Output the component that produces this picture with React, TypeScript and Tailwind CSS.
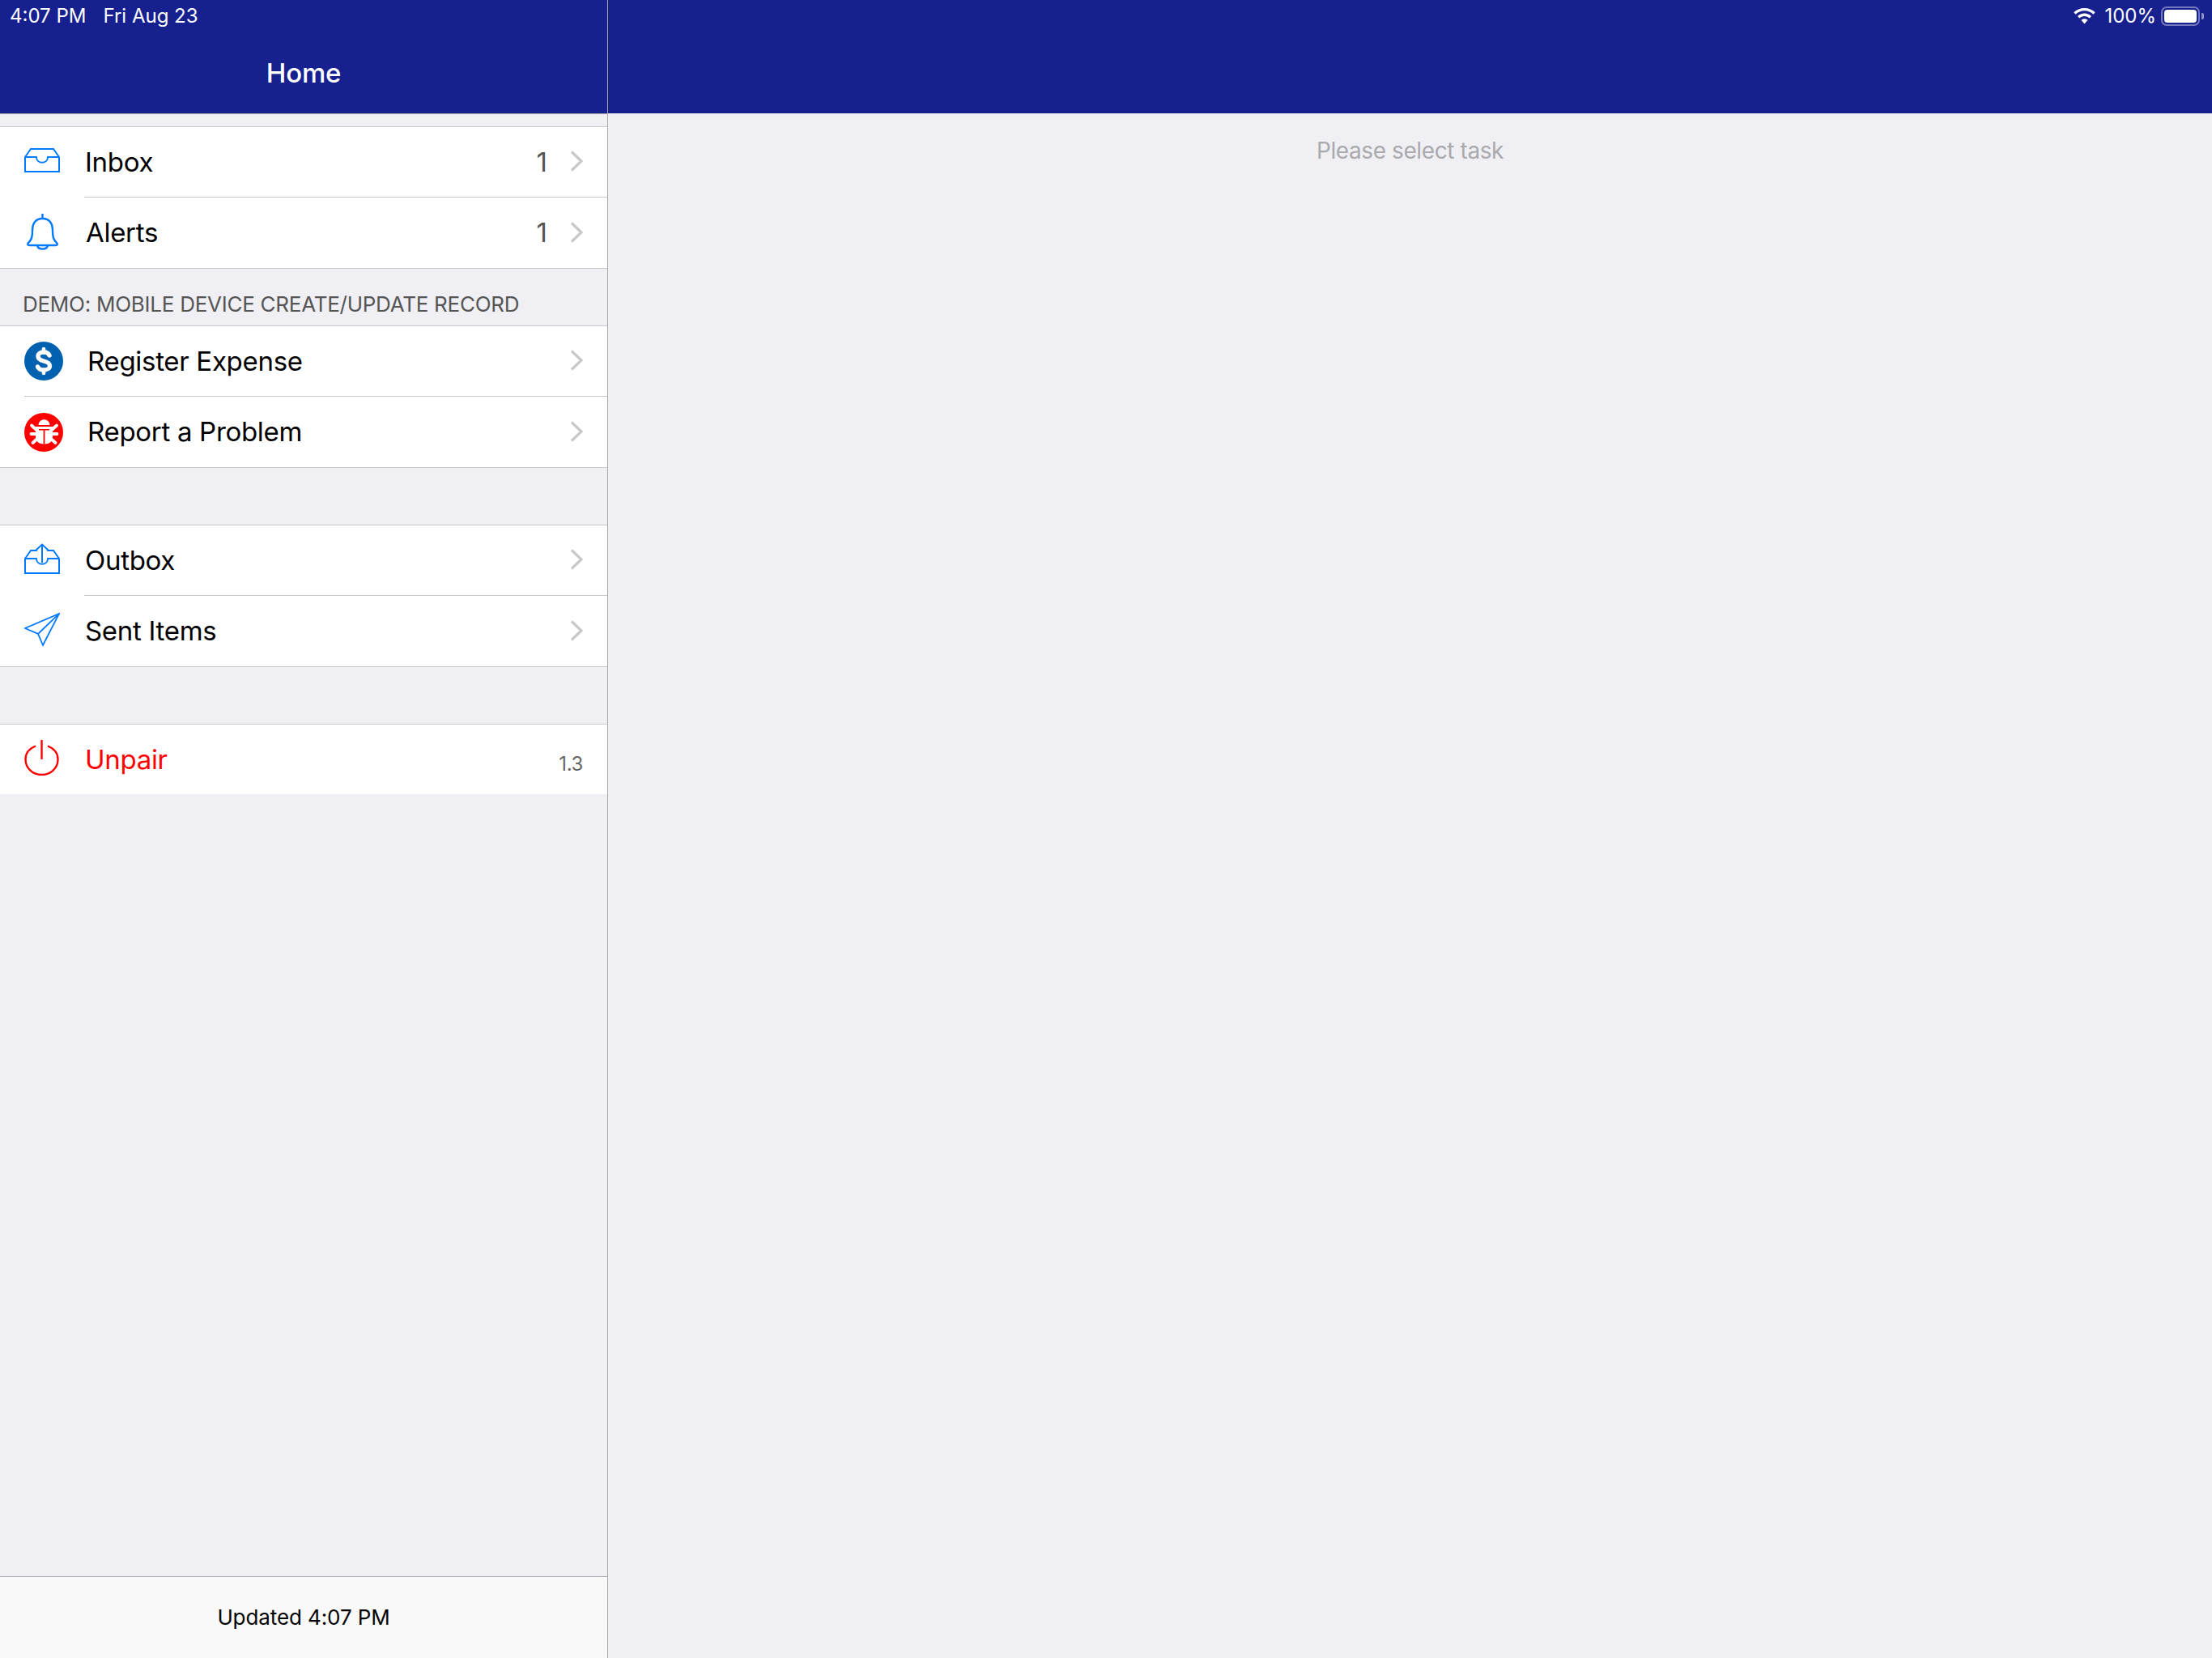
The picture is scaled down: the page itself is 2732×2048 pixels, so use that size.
import type { ReactNode } from "react";

const font = "font-['Inter','Noto_Sans',sans-serif]";

function Chevron() {
  return (
    <svg width="16" height="26" viewBox="0 0 16 26" fill="none" className="shrink-0 mb-[2px]">
      <path d="M2 1.5 L14 13 L2 24.5" stroke="#c7c7cc" strokeWidth="3.2" />
    </svg>
  );
}

function InboxIcon() {
  return (
    <svg width="44" height="30" viewBox="0 0 44 30" fill="none" stroke="#007aff" strokeWidth="2">
      <path d="M1 11 L8 1 H36 L43 11 V29 H1 Z" />
      <path d="M1 11 H15 C15 20 29 20 29 11 H43" />
    </svg>
  );
}

function BellIcon() {
  return (
    <svg width="40" height="45" viewBox="0 0 40 45" fill="none" stroke="#007aff" strokeWidth="2.4">
      <path d="M19.5 0 V6" />
      <path d="M19.5 6 C10 6 7 13 7 21 C7 29 6 32 2 36 C0.5 38 1.5 39 3 39 H36 C37.5 39 38.5 38 37 36 C33 32 32 29 32 21 C32 13 29 6 19.5 6 Z" />
      <path d="M13 39 C14 45 25 45 26 39" />
    </svg>
  );
}

function DollarIcon() {
  return (
    <svg width="48" height="48" viewBox="0 0 48 48">
      <circle cx="24" cy="24" r="24" fill="#0061b0" />
      <path d="M31 17 C30 14.5 27.5 13 24 13 C19.5 13 17 15 17 18 C17 21.5 20 23 24 24 C28 25 31.5 26.5 31.5 30 C31.5 33 28.5 35 24 35 C20 35 17.5 33.5 16.5 31" fill="none" stroke="#fff" strokeWidth="5.4" strokeLinecap="round" />
      <path d="M24 9 V13 M24 35 V39" stroke="#fff" strokeWidth="4.6" strokeLinecap="round" />
    </svg>
  );
}

function BugIcon() {
  return (
    <svg width="48" height="48" viewBox="0 0 48 48">
      <circle cx="24" cy="24" r="24" fill="#ff0000" />
      <path d="M17.5 15 C18 6 31 6 31.5 15 Z" fill="#fff" />
      <path d="M14 17 H35 V30 C35 35 31 38.5 24.5 38.5 C18 38.5 14 35 14 30 Z" fill="#fff" />
      <path d="M18 20 H31 V21.6 H25.4 V38.5 H23.6 V21.6 H18 Z" fill="#ff0000" />
      <path d="M9 15.5 L15 21 M40 15.5 L34 21 M8.5 26 H15 M40.5 26 H34 M10.5 37 L16 32 M38.5 37 L33 32" stroke="#fff" strokeWidth="3.8" strokeLinecap="round" />
    </svg>
  );
}

function OutboxIcon() {
  return (
    <svg width="44" height="38" viewBox="0 0 44 38" fill="none" stroke="#007aff" strokeWidth="2">
      <path d="M16 9 H8 L1 19 V37 H43 V19 L36 9 H28" />
      <path d="M1 19 H15 C15 28 29 28 29 19 H43" />
      <path d="M22 24 V1.5 M14.5 8.5 L22 1.5 L29.5 8.5" />
    </svg>
  );
}

function SentIcon() {
  return (
    <svg width="44" height="42" viewBox="0 0 44 42" fill="none" stroke="#007aff" strokeWidth="1.8" strokeLinejoin="miter">
      <path d="M43 1 L1 19 L17 26 L23 40 Z" />
      <path d="M43 1 L17 26" />
    </svg>
  );
}

function PowerIcon() {
  return (
    <svg width="44" height="44" viewBox="0 0 44 44" fill="none" stroke="#ff0000" strokeWidth="2.4">
      <path d="M14 7.5 C6.5 10.5 1.5 16 1.5 24 C1.5 35 10.5 43 21.5 43 C32.5 43 41.5 35 41.5 24 C41.5 16 36.5 10.5 29 7.5" />
      <path d="M21.5 0 V24" />
    </svg>
  );
}

function WifiIcon() {
  return (
    <svg width="27" height="20" viewBox="0 0 27 20" fill="#fff">
      <path d="M13.5 0 C8.3 0 3.7 2 0.3 5.3 L2.6 7.8 C5.4 5 9.2 3.3 13.5 3.3 C17.8 3.3 21.6 5 24.4 7.8 L26.7 5.3 C23.3 2 18.7 0 13.5 0 Z" />
      <path d="M13.5 6.6 C10.2 6.6 7.2 7.9 5 10 L7.3 12.5 C8.9 11 11.1 10 13.5 10 C15.9 10 18.1 11 19.7 12.5 L22 10 C19.8 7.9 16.8 6.6 13.5 6.6 Z" />
      <path d="M13.5 13.2 C11.9 13.2 10.5 13.8 9.4 14.8 L13.5 19.5 L17.6 14.8 C16.5 13.8 15.1 13.2 13.5 13.2 Z" />
    </svg>
  );
}

function Battery() {
  return (
    <div className="flex items-center gap-[2px]">
      <div className="w-[48px] h-[24px] rounded-[7px] border-2 border-white/40 p-[2px]">
        <div className="w-full h-full rounded-[4px] bg-white" />
      </div>
      <div className="w-[3px] h-[8px] rounded-r-[2px] bg-white/50" />
    </div>
  );
}

type RowProps = {
  icon: ReactNode;
  label: string;
  iconClass: string;
  labelClass?: string;
  count?: string;
  chevron?: boolean;
  version?: string;
  height?: string;
};

function Row({ icon, label, iconClass, labelClass = "text-black", count, chevron = true, version, height = "h-[86px]" }: RowProps) {
  return (
    <div className={`${height} flex items-center bg-white pr-[30px]`}>
      <div className={`flex items-center justify-start shrink-0 ${iconClass}`}>{icon}</div>
      <span className={`text-[33px] leading-none tracking-[-0.3px] ${labelClass}`}>{label}</span>
      <div className="ml-auto flex items-center gap-[28px]">
        {count && <span className="text-[33px] leading-none text-[#555]">{count}</span>}
        {version && <span className="text-[24px] leading-none tracking-[-0.4px] text-[#666] pt-[11px]">{version}</span>}
        {chevron && <Chevron />}
      </div>
    </div>
  );
}

function Group({ children, noBottom }: { children: ReactNode; noBottom?: boolean }) {
  return <div className={`border-t border-[#c8c7cc] ${noBottom ? "" : "border-b"}`}>{children}</div>;
}

function Sep({ inset }: { inset: string }) {
  return (
    <div className="bg-white">
      <div className={`h-px bg-[#c8c7cc] ${inset}`} />
    </div>
  );
}

export default function App() {
  return (
    <div className={`${font} flex w-[2732px] h-[2048px] overflow-hidden bg-[#efeff4]`}>
      {/* master column */}
      <div className="w-[751px] h-full shrink-0 flex flex-col border-r border-[#a9a9ad]">
        <div className="h-[141px] shrink-0 bg-[#17208f] border-b border-[#a9a9ad] text-white">
          <div className="h-[40px] pl-[12px] flex items-center gap-[21px] text-[24px] leading-none">
            <span>4:07 PM</span>
            <span>Fri Aug 23</span>
          </div>
          <div className="h-[100px] flex items-center justify-center text-[33px] leading-none font-medium tracking-[-0.2px]">Home</div>
        </div>

        <div className="h-[15px] shrink-0" />
        <Group>
          <Row icon={<InboxIcon />} label="Inbox" iconClass="w-[105px] pl-[30px] mb-[4px]" count="1" />
          <Sep inset="ml-[104px]" />
          <Row icon={<BellIcon />} label="Alerts" iconClass="w-[106px] pl-[33px] mb-[2px]" count="1" height="h-[87px]" />
        </Group>

        <div className="h-[70px] shrink-0 flex items-end pl-[28px] pb-[13px] text-[26px] leading-none tracking-[-0.26px] text-[#555]">
          DEMO: MOBILE DEVICE CREATE/UPDATE RECORD
        </div>
        <Group>
          <Row icon={<DollarIcon />} label="Register Expense" iconClass="w-[108px] pl-[30px]" />
          <Sep inset="ml-[30px]" />
          <Row icon={<BugIcon />} label="Report a Problem" iconClass="w-[108px] pl-[30px]" height="h-[87px]" />
        </Group>

        <div className="h-[70px] shrink-0" />
        <Group>
          <Row icon={<OutboxIcon />} label="Outbox" iconClass="w-[105px] pl-[30px] mb-[4px]" />
          <Sep inset="ml-[104px]" />
          <Row icon={<SentIcon />} label="Sent Items" iconClass="w-[105px] pl-[30px] mb-[3px]" height="h-[87px]" />
        </Group>

        <div className="h-[70px] shrink-0" />
        <Group noBottom>
          <Row icon={<PowerIcon />} label="Unpair" iconClass="w-[105px] pl-[30px] mb-[4px]" labelClass="text-[#ff0000]" chevron={false} version="1.3" />
        </Group>

        <div className="mt-auto h-[101px] shrink-0 bg-[#f9f9f9] border-t border-[#a9a9ad] flex items-center justify-center text-[26px] leading-none tracking-[-0.1px] text-black">
          Updated 4:07 PM
        </div>
      </div>

      {/* detail column */}
      <div className="flex-1 flex flex-col min-w-0">
        <div className="h-[140px] shrink-0 bg-[#17208f] text-white">
          <div className="h-[40px] pr-[10px] flex items-center justify-end text-[24px] leading-none">
            <WifiIcon />
            <span className="ml-[11px] mr-[6px]">100%</span>
            <Battery />
          </div>
        </div>
        <div className="pt-[32px] text-center text-[28px] leading-none tracking-[-0.4px] text-[#a9a9ae]">Please select task</div>
      </div>
    </div>
  );
}
